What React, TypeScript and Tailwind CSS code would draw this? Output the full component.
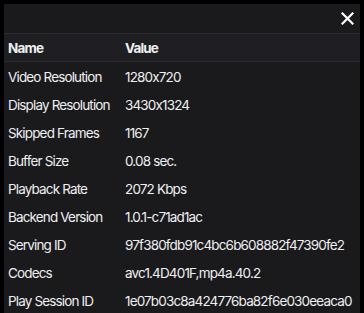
import React from "react";

const rows: [string, string][] = [
  ["Video Resolution", "1280x720"],
  ["Display Resolution", "3430x1324"],
  ["Skipped Frames", "1167"],
  ["Buffer Size", "0.08 sec."],
  ["Playback Rate", "2072 Kbps"],
  ["Backend Version", "1.0.1-c71ad1ac"],
  ["Serving ID", "97f380fdb91c4bc6b608882f47390fe2"],
  ["Codecs", "avc1.4D401F,mp4a.40.2"],
  ["Play Session ID", "1e07b03c8a424776ba82f6e030eeaca0"],
];

export default function App() {
  return (
    <div
      className="w-[364px] h-[313px] bg-black p-[4px] overflow-hidden"
      style={{ fontFamily: "Inter, 'Noto Sans', sans-serif" }}
    >
      <div className="h-[309px] w-[356px] bg-[#1a1a1d] text-[#efeff1] text-[13.5px] tracking-[-0.85px]">
        <div className="h-[29px] flex items-center justify-end pr-[6px]">
          <svg width="13" height="13" viewBox="0 0 13 13" className="text-white">
            <path d="M1.5 1.5 L11.5 11.5 M11.5 1.5 L1.5 11.5" stroke="currentColor" strokeWidth="2.2" strokeLinecap="square" />
          </svg>
        </div>
        <div className="h-[29px] flex items-center pt-[1px] bg-[#1f1f23] border-y border-[#2c2c30] font-bold">
          <div className="w-[121px] pl-[4px]">Name</div>
          <div>Value</div>
        </div>
        {rows.map(([k, v]) => (
          <div key={k} className="h-[28px] flex items-center pt-[2px]">
            <div className="w-[121px] pl-[4px] shrink-0">{k}</div>
            <div className="whitespace-nowrap">{v}</div>
          </div>
        ))}
      </div>
    </div>
  );
}
